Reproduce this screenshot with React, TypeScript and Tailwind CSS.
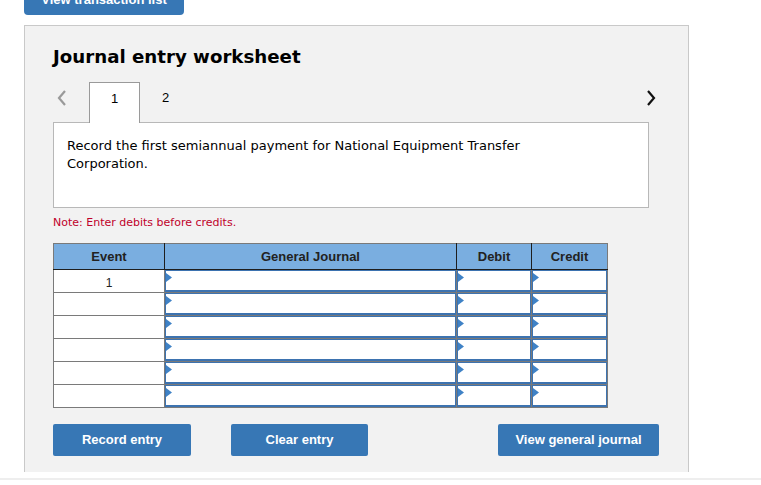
import React from "react";

const Tri = () => (
  <svg className="absolute left-0 top-[2px]" width="6" height="9" viewBox="0 0 6 9">
    <polygon points="0,0 6,4.5 0,9" fill="#3f82c6" />
  </svg>
);

const InputCell = () => (
  <td className="border border-[#7a7a7a] p-0 h-[23px]">
    <div className="relative h-[22px] bg-white border border-[#3d73b0] border-b-2">
      <Tri />
    </div>
  </td>
);

export default function App() {
  const rows = [0, 1, 2, 3, 4, 5];
  return (
    <div className="relative w-[761px] h-[485px] overflow-hidden bg-white" style={{ fontFamily: '"DejaVu Sans", Verdana, sans-serif' }}>
      <div className="ml-[24px] -mt-[16px] w-[160px] h-[31px] rounded-b-[4px] bg-[#3777b5] flex items-center justify-center text-white text-[13px] font-bold" style={{ fontFamily: '"Liberation Sans", Arial, sans-serif' }}>
        View transaction list
      </div>
      <div className="ml-[24px] mt-[10px] w-[665px] h-[447px] bg-[#f2f2f2] border border-[#c9c9c9] border-b-0 pl-[28px] pt-[20px]">
        <h1 className="text-[18.2px] leading-[22px] font-bold text-black">Journal entry worksheet</h1>
        <div className="mt-[14px] flex items-end h-[40px] w-[596px] relative">
          <div className="w-[36px] h-[40px] flex items-start pt-[8px] pl-[4px]">
            <svg width="10" height="16" viewBox="0 0 10 16">
              <polyline points="8,1 2,8 8,15" fill="none" stroke="#9a9a9a" strokeWidth="2.2" />
            </svg>
          </div>
          <div className="w-[51px] h-[41px] -mb-[1px] bg-white border border-[#9a9a9a] border-b-0 relative z-10 flex justify-center pt-[8px] text-[13px] leading-[16px] text-black" style={{ fontFamily: '"Liberation Sans", Arial, sans-serif' }}>
            1
          </div>
          <div className="w-[51px] h-[40px] flex justify-center pt-[8px] text-[13px] leading-[16px] text-black" style={{ fontFamily: '"Liberation Sans", Arial, sans-serif' }}>
            2
          </div>
          <div className="flex-1" />
          <div className="h-[40px] flex items-start pt-[8px] -mr-[7px]">
            <svg width="10" height="16" viewBox="0 0 10 16">
              <polyline points="2,1 8,8 2,15" fill="none" stroke="#111" strokeWidth="2.2" />
            </svg>
          </div>
        </div>
        <div className="w-[596px] h-[86px] bg-white border border-[#b8b8b8] px-[13px] pt-[14px]">
          <p className="w-[470px] text-[13px] leading-[18px] text-black">
            Record the first semiannual payment for National Equipment Transfer Corporation.
          </p>
        </div>
        <p className="mt-[7px] text-[11px] leading-[16px] text-[#c0002a]">Note: Enter debits before credits.</p>
        <table className="mt-[12px] border-collapse table-fixed w-[554px]" style={{ fontFamily: '"Liberation Sans", Arial, sans-serif' }}>
          <colgroup>
            <col className="w-[111px]" />
            <col className="w-[292px]" />
            <col className="w-[75px]" />
            <col className="w-[76px]" />
          </colgroup>
          <thead>
            <tr className="h-[26px] bg-[#7aaee0] text-[13px] font-bold text-[#222]">
              <th className="border border-[#7a7a7a] border-r-[#1e1e1e] border-b-[#1e1e1e] font-bold">Event</th>
              <th className="border border-[#7a7a7a] border-x-[#1e1e1e] border-b-[#1e1e1e] font-bold">General Journal</th>
              <th className="border border-[#7a7a7a] border-x-[#1e1e1e] border-b-[#1e1e1e] font-bold">Debit</th>
              <th className="border border-[#7a7a7a] border-l-[#1e1e1e] border-b-[#1e1e1e] font-bold">Credit</th>
            </tr>
          </thead>
          <tbody>
            {rows.map((r) => (
              <tr key={r} className="h-[23px]">
                <td className="border border-[#7a7a7a] bg-white text-center text-[12px] text-[#222] align-top pt-[4px] h-[23px]">
                  {r === 0 ? "1" : ""}
                </td>
                <InputCell />
                <InputCell />
                <InputCell />
              </tr>
            ))}
          </tbody>
        </table>
        <div className="mt-[16px] flex w-[606px] text-white text-[13px] font-bold" style={{ fontFamily: '"Liberation Sans", Arial, sans-serif' }}>
          <button className="w-[138px] h-[32px] rounded-[2px] bg-[#3777b5]">Record entry</button>
          <button className="ml-[40px] w-[137px] h-[32px] rounded-[2px] bg-[#3777b5]">Clear entry</button>
          <div className="flex-1" />
          <button className="w-[161px] h-[32px] rounded-[2px] bg-[#3777b5]">View general journal</button>
        </div>
      </div>
      <div className="absolute left-0 top-[478px] w-[761px] h-[2px] bg-[#eeeeee]" />
    </div>
  );
}
